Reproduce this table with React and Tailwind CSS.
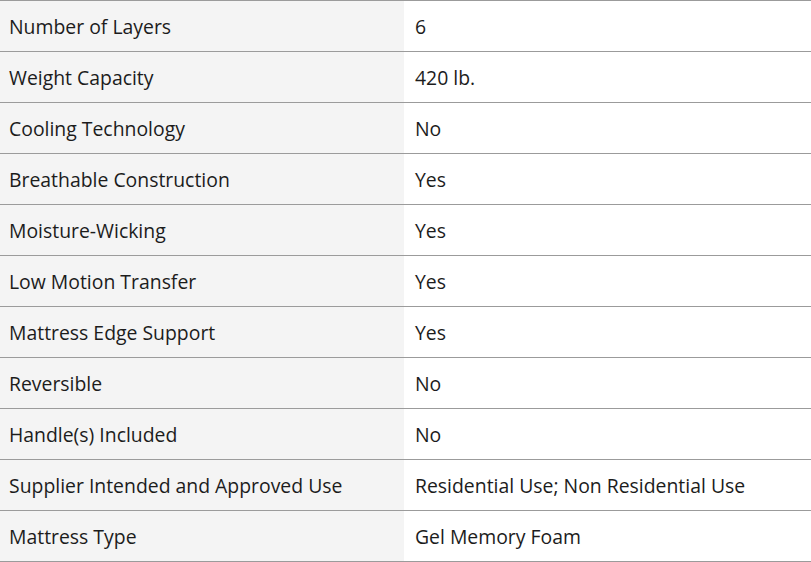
const rows = [
  ["Number of Layers", "6"],
  ["Weight Capacity", "420 lb."],
  ["Cooling Technology", "No"],
  ["Breathable Construction", "Yes"],
  ["Moisture-Wicking", "Yes"],
  ["Low Motion Transfer", "Yes"],
  ["Mattress Edge Support", "Yes"],
  ["Reversible", "No"],
  ["Handle(s) Included", "No"],
  ["Supplier Intended and Approved Use", "Residential Use; Non Residential Use"],
  ["Mattress Type", "Gel Memory Foam"],
];

export default function App() {
  return (
    <div className="w-[811px] h-[562px] bg-white text-[#1c1c1c] text-[19.4px] font-['Open_Sans',sans-serif] border-t border-[#9b9b9b]">
      {rows.map(([k, v]) => (
        <div key={k} className="flex h-[51px] border-b border-[#9b9b9b]">
          <div className="w-[404px] bg-[#f4f4f4] pl-[9px] pt-[2px] flex items-center">{k}</div>
          <div className="flex-1 pl-[11px] pt-[2px] flex items-center">{v}</div>
        </div>
      ))}
    </div>
  );
}
